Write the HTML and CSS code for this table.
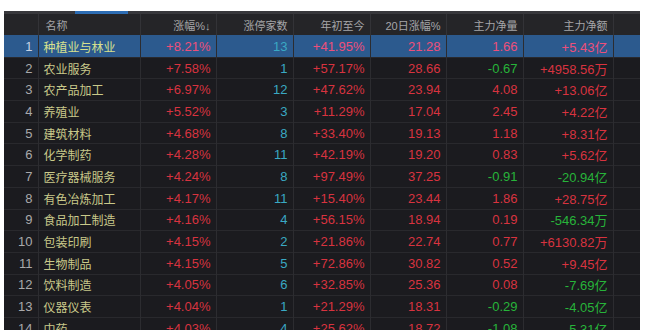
FILE: index.html
```html
<!DOCTYPE html>
<html lang="zh">
<head>
  <meta charset="UTF-8">
  <title>板块涨幅</title>
  <link rel="stylesheet" href="styles.css">
</head>
<body>
  <div class="board">
    <div class="tabs"><span class="tab-on"></span></div>
    <table class="quotes">
      <colgroup>
        <col class="c-no"><col class="c-name"><col class="c-pct"><col class="c-cnt">
        <col class="c-ytd"><col class="c-d20"><col class="c-vol"><col class="c-amt"><col class="c-pad">
      </colgroup>
      <thead>
        <tr>
          <th></th><th class="left">名称</th><th>涨幅%↓</th><th>涨停家数</th><th>年初至今</th>
          <th>20日涨幅%</th><th>主力净量</th><th>主力净额</th><th></th>
        </tr>
      </thead>
      <tbody id="rows"></tbody>
    </table>
  </div>

  <script>
    var data = [
      ['种植业与林业', '+8.21%', 13, '+41.95%', '21.28', '1.66', '+5.43亿'],
      ['农业服务', '+7.58%', 1, '+57.17%', '28.66', '-0.67', '+4958.56万'],
      ['农产品加工', '+6.97%', 12, '+47.62%', '23.94', '4.08', '+13.06亿'],
      ['养殖业', '+5.52%', 3, '+11.29%', '17.04', '2.45', '+4.22亿'],
      ['建筑材料', '+4.68%', 8, '+33.40%', '19.13', '1.18', '+8.31亿'],
      ['化学制药', '+4.28%', 11, '+42.19%', '19.20', '0.83', '+5.62亿'],
      ['医疗器械服务', '+4.24%', 8, '+97.49%', '37.25', '-0.91', '-20.94亿'],
      ['有色冶炼加工', '+4.17%', 11, '+15.40%', '23.44', '1.86', '+28.75亿'],
      ['食品加工制造', '+4.16%', 4, '+56.15%', '18.94', '0.19', '-546.34万'],
      ['包装印刷', '+4.15%', 2, '+21.86%', '22.74', '0.77', '+6130.82万'],
      ['生物制品', '+4.15%', 5, '+72.86%', '30.82', '0.52', '+9.45亿'],
      ['饮料制造', '+4.05%', 6, '+32.85%', '25.36', '0.08', '-7.69亿'],
      ['仪器仪表', '+4.04%', 1, '+21.29%', '18.31', '-0.29', '-4.05亿'],
      ['中药', '+4.03%', 4, '+25.62%', '18.72', '-1.08', '-5.31亿']
    ];

    function tone(v) {
      return v.charAt(0) === '-' ? 'down' : 'up';
    }

    var html = '';
    data.forEach(function (r, i) {
      html += '<tr' + (i === 0 ? ' class="sel"' : '') + '>' +
        '<td class="no">' + (i + 1) + '</td>' +
        '<td class="name">' + r[0] + '</td>' +
        '<td class="up">' + r[1] + '</td>' +
        '<td class="cnt">' + r[2] + '</td>' +
        '<td class="up">' + r[3] + '</td>' +
        '<td class="up">' + r[4] + '</td>' +
        '<td class="' + tone(r[5]) + '">' + r[5] + '</td>' +
        '<td class="' + tone(r[6]) + '">' + r[6] + '</td>' +
        '<td></td></tr>';
    });
    document.getElementById('rows').innerHTML = html;
  </script>
</body>
</html>
```

FILE: styles.css
```css
body { margin: 0; background: #fff; font-family: "Liberation Sans", "Noto Sans CJK SC", sans-serif; }
.board { margin: 11px 7px 0 4px; background: #1b1b1f; height: 319px; overflow: hidden; }
.tabs { height: 3px; background: #38383c; padding-left: 71px; }
.tab-on { display: block; width: 53px; height: 3px; background: #2d6db4; }
.quotes { width: 100%; table-layout: fixed; border-collapse: collapse; font-size: 12px; }
.c-no { width: 34px; } .c-name { width: 102px; } .c-pct { width: 76px; } .c-cnt { width: 77px; }
.c-ytd { width: 77px; } .c-d20 { width: 76px; } .c-vol { width: 77px; } .c-amt { width: 90px; } .c-pad { width: 27px; }
th { height: 21px; padding: 0 5px; background: #252528; color: #a6a6a8; font-weight: normal; font-size: 11px; text-align: right; border-right: 1px solid #333337; white-space: nowrap; }
th.left { text-align: left; padding-left: 7px; }
td { height: 20.7px; padding: 0 5px; text-align: right; border-right: 1px solid #2c2c30; border-top: 1px solid #29292d; white-space: nowrap; }
td.no { color: #a9a9ab; padding-right: 5px; font-size: 13px; }
td.name { text-align: left; color: #c9c98a; padding-left: 5px; }
td.cnt { color: #3aa9c4; font-size: 13px; }
.up { color: #d8333f; font-size: 13px; }
.down { color: #27b43a; font-size: 13px; }
tr.sel td { background: #2c5a8e; border-top-color: #2c5a8e; }
tr.sel td.up { color: #ee4f7a; }
tr.sel td.no { color: #c7d3e4; }
tr.sel td.name { color: #d6e08e; }
```
